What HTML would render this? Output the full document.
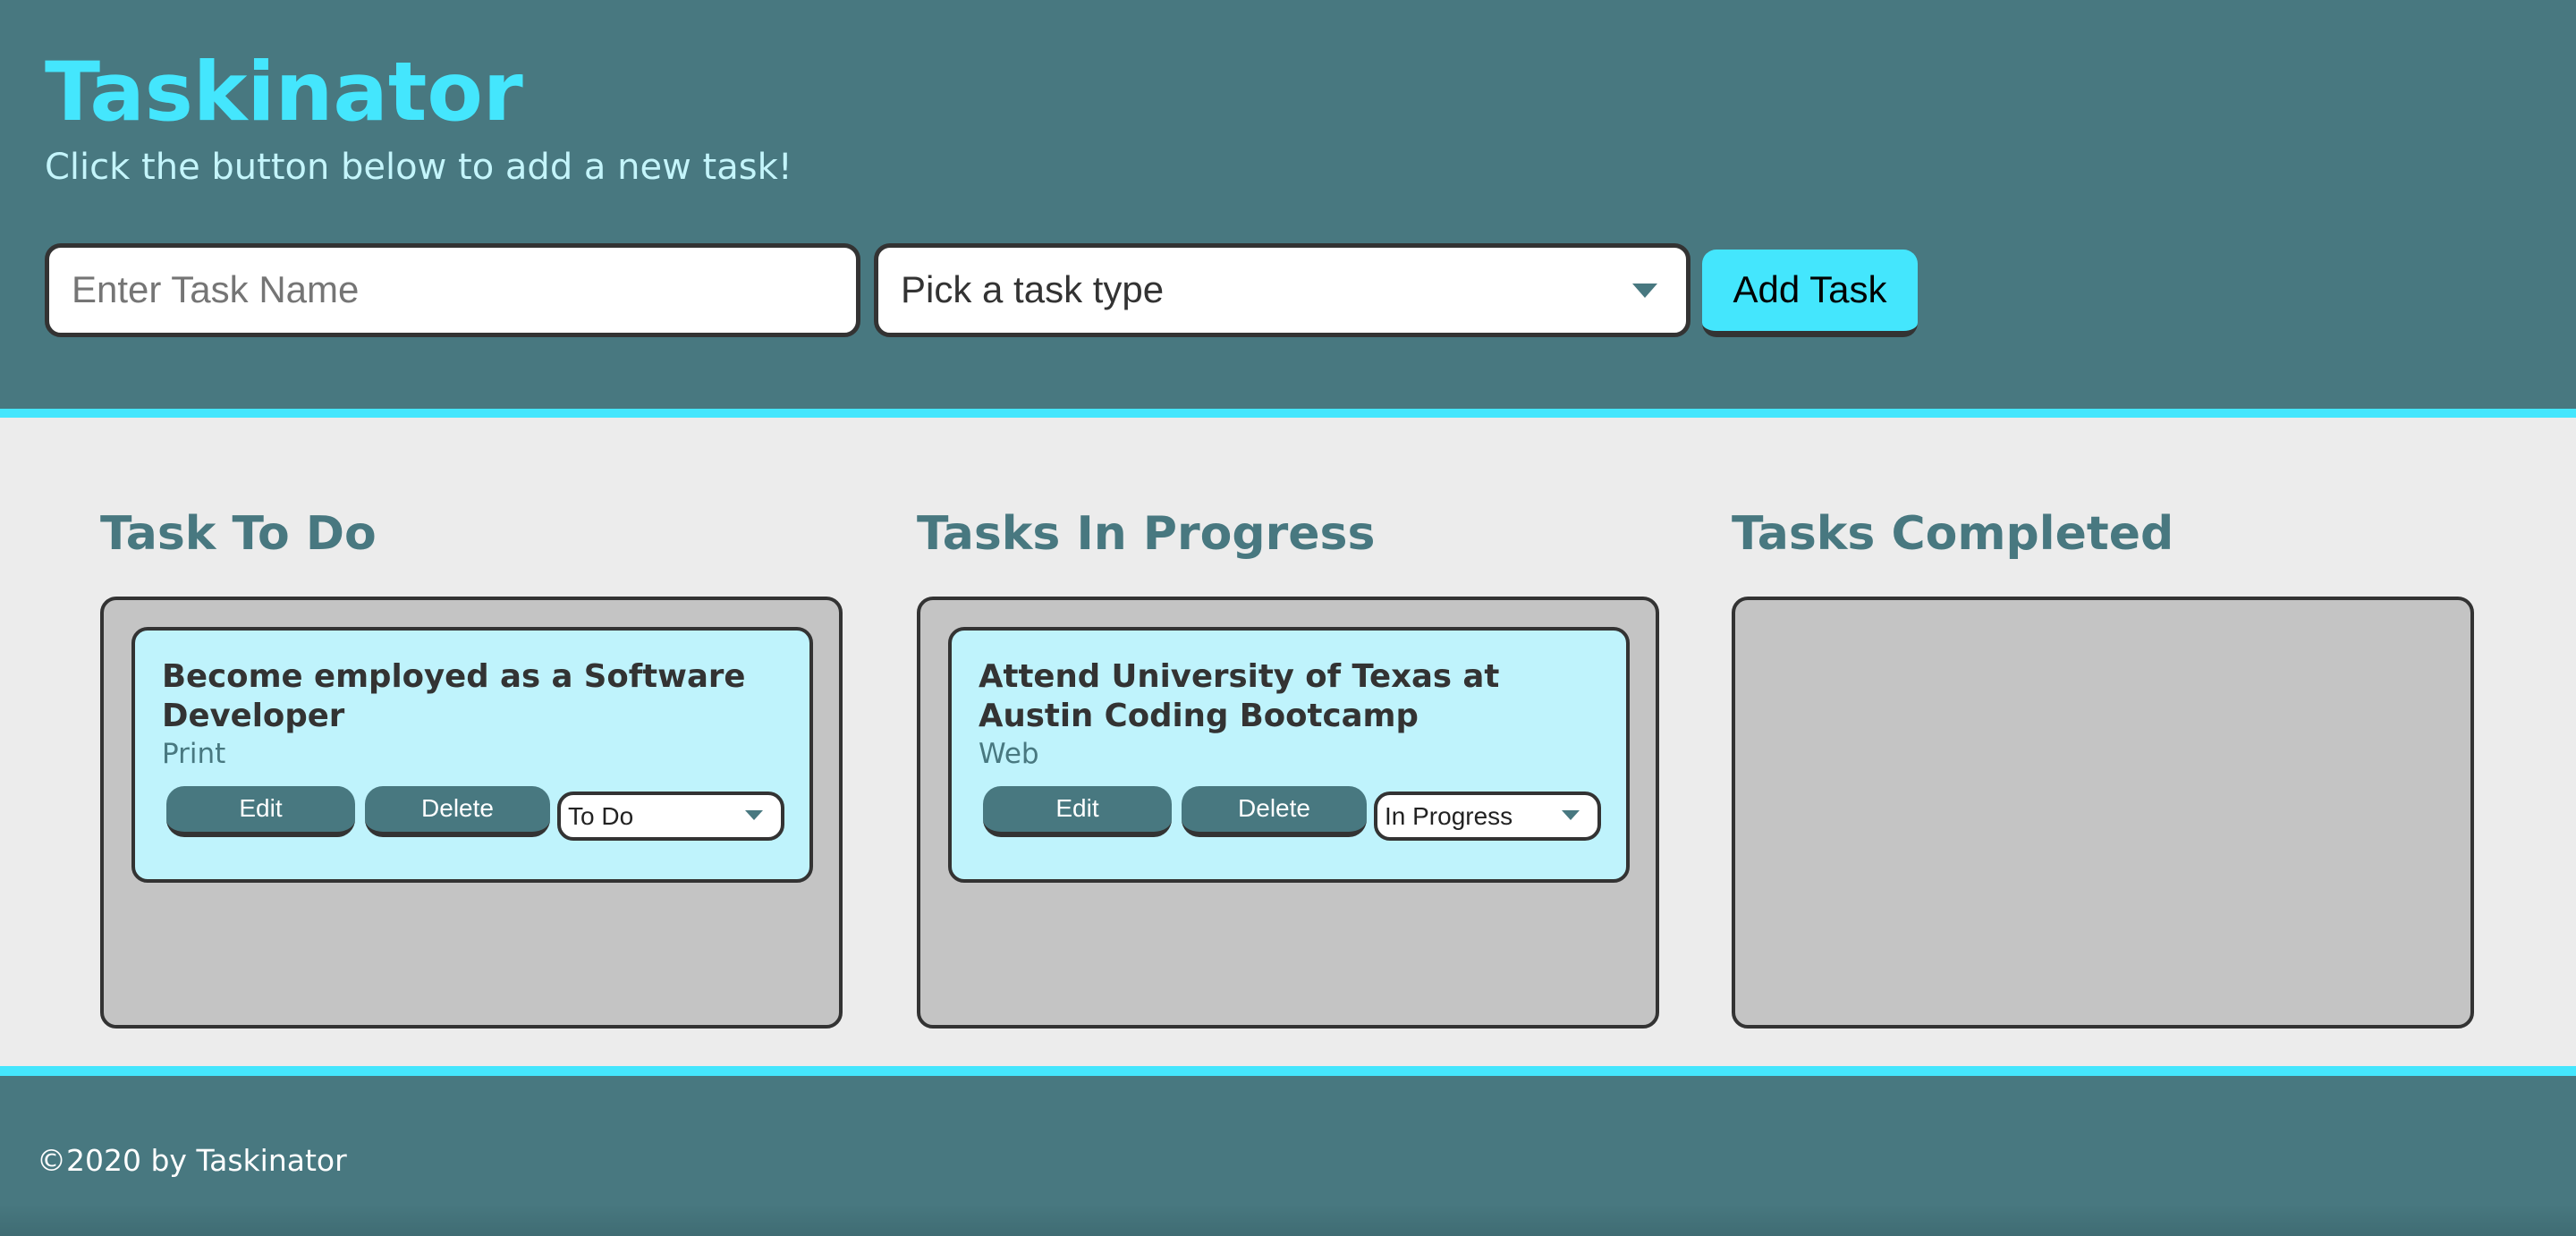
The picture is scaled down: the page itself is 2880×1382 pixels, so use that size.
<!DOCTYPE html>
<html><head><meta charset="utf-8"><style>
*{box-sizing:border-box;margin:0;padding:0}
body{width:2880px;height:1382px;overflow:hidden;background:#ececec;font-family:"DejaVu Sans",Verdana,sans-serif;position:relative}
header{position:absolute;left:0;top:0;width:2880px;background:#487880;border-bottom:10px solid #44e6fd;height:467px}
h1{position:absolute;left:50px;top:44px;font-size:91px;font-weight:bold;color:#44e6fd;line-height:120px}
.sub{position:absolute;left:50px;top:162px;font-size:40px;color:#c4f5fb;line-height:50px}
.inp{position:absolute;top:272px;height:105px;background:#fff;border:5px solid #333;border-radius:18px;font-family:"Liberation Sans",Arial,sans-serif;font-size:42px;padding-left:25px;line-height:93px}
.btn{position:absolute;left:1903px;top:279px;width:241px;height:98px;background:#44e6fd;border-radius:16px;border-bottom:7px solid #333;font-family:"Liberation Sans",Arial,sans-serif;font-size:42px;text-align:center;line-height:90px;color:#000}
.tri{position:absolute;width:0;height:0;border-left:14px solid transparent;border-right:14px solid transparent;border-top:16px solid #487880}
h2{position:absolute;top:562px;font-size:52px;font-weight:bold;color:#487880;line-height:70px}
.col{position:absolute;top:667px;width:830px;height:483px;background:#c4c4c4;border:4px solid #333;border-radius:18px}
.card{position:absolute;left:31px;top:30px;width:762px;height:286px;background:#bff3fc;border:4px solid #333;border-radius:18px}
.ct{position:absolute;left:30px;top:30px;font-size:35.5px;font-weight:bold;color:#333;line-height:44px;width:700px}
.ty{position:absolute;left:30px;top:118px;font-size:31px;color:#487880;line-height:40px}
.b{position:absolute;top:174px;height:57px;background:#487880;border-radius:20px;border-bottom:6px solid #333;color:#fff;font-family:"Liberation Sans",Arial,sans-serif;font-size:28px;text-align:center;line-height:50px}
.sel{position:absolute;left:472px;top:180px;width:254px;height:55px;background:#fff;border:4px solid #333;border-radius:18px;font-family:"Liberation Sans",Arial,sans-serif;font-size:28px;line-height:47px;padding-left:8px;color:#222}
footer{position:absolute;left:0;top:1192px;width:2880px;height:190px;border-top:11px solid #44e6fd;background:linear-gradient(#487880 0%,#487880 80%,#3f6c73 100%)}
footer p{position:absolute;left:41px;top:75px;font-size:33px;color:#fff}
</style></head><body>
<header>
<h1>Taskinator</h1>
<div class="sub">Click the button below to add a new task!</div>
<div class="inp" style="left:50px;width:912px;color:#757575">Enter Task Name</div>
<div class="inp" style="left:977px;width:913px;color:#333">Pick a task type<div class="tri" style="right:32px;top:40px"></div></div>
<div class="btn">Add Task</div>
</header>
<h2 style="left:112px">Task To Do</h2>
<h2 style="left:1025px">Tasks In Progress</h2>
<h2 style="left:1936px">Tasks Completed</h2>
<div class="col" style="left:112px"><div class="card">
<div class="ct">Become employed as a Software Developer</div>
<div class="ty">Print</div>
<div class="b" style="left:35px;width:211px">Edit</div>
<div class="b" style="left:257px;width:207px">Delete</div>
<div class="sel">To Do<div class="tri" style="right:20px;top:17px;border-left-width:10px;border-right-width:10px;border-top-width:11px"></div></div>
</div></div>
<div class="col" style="left:1025px"><div class="card">
<div class="ct">Attend University of Texas at Austin Coding Bootcamp</div>
<div class="ty">Web</div>
<div class="b" style="left:35px;width:211px">Edit</div>
<div class="b" style="left:257px;width:207px">Delete</div>
<div class="sel">In Progress<div class="tri" style="right:20px;top:17px;border-left-width:10px;border-right-width:10px;border-top-width:11px"></div></div>
</div></div>
<div class="col" style="left:1936px"></div>
<footer><p>©2020 by Taskinator</p></footer>
</body></html>
